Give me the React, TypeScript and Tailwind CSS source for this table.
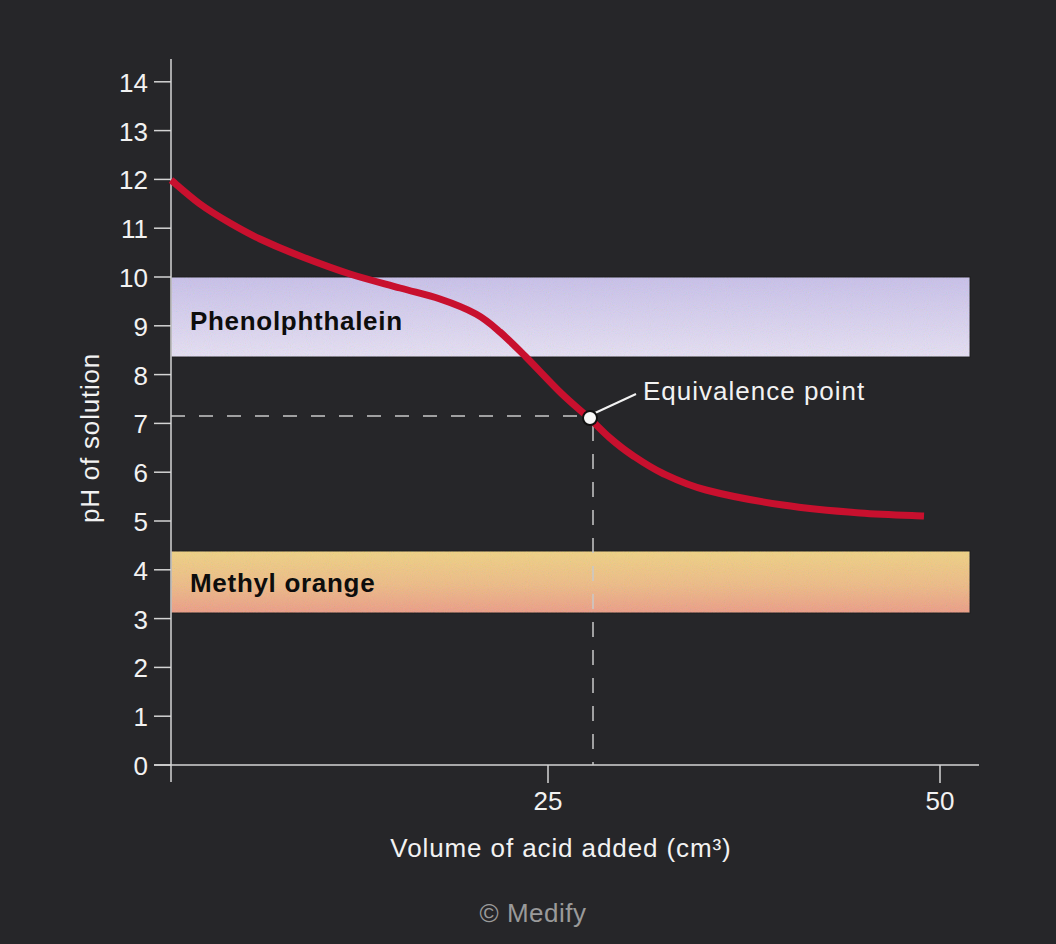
import React from "react";

const AXIS_X = 171;
const AXIS_Y = 765;
const UNIT = 48.8;
const yOf = (ph: number) => AXIS_Y - ph * UNIT;

// points read off the reference curve
const CURVE: [number, number][] = [
  [171, 180],
  [200, 204],
  [230, 223],
  [260, 239],
  [300, 256],
  [350, 274],
  [400, 288],
  [440, 299],
  [476, 314],
  [500, 332],
  [526, 357],
  [561, 393],
  [589, 418],
  [610, 438],
  [632, 455],
  [662, 473],
  [706, 490],
  [783, 505],
  [860, 513],
  [924, 516],
];

const smoothPath = (pts: [number, number][]) => {
  let d = `M${pts[0][0]},${pts[0][1]}`;
  for (let i = 0; i < pts.length - 1; i++) {
    const p0 = pts[i - 1] || pts[i];
    const p1 = pts[i];
    const p2 = pts[i + 1];
    const p3 = pts[i + 2] || p2;
    const c1x = p1[0] + (p2[0] - p0[0]) / 6;
    const c1y = p1[1] + (p2[1] - p0[1]) / 6;
    const c2x = p2[0] - (p3[0] - p1[0]) / 6;
    const c2y = p2[1] - (p3[1] - p1[1]) / 6;
    d += ` C${c1x.toFixed(1)},${c1y.toFixed(1)} ${c2x.toFixed(1)},${c2y.toFixed(1)} ${p2[0]},${p2[1]}`;
  }
  return d;
};

const TitrationChart = () => {
  const ticks = Array.from({ length: 15 }, (_, i) => i);
  const font = "'Liberation Sans', Arial, sans-serif";

  return (
    <svg width={1056} height={897} viewBox="0 0 1056 897" className="block" style={{ fontFamily: font }}>
      <defs>
        <linearGradient id="phenol" x1="0" y1="0" x2="0" y2="1">
          <stop offset="0" stopColor="#c8c0ea" />
          <stop offset="1" stopColor="#e6e0f4" />
        </linearGradient>
        <linearGradient id="methyl" x1="0" y1="0" x2="0" y2="1">
          <stop offset="0" stopColor="#f0d283" />
          <stop offset="0.55" stopColor="#eebb86" />
          <stop offset="1" stopColor="#ec9c86" />
        </linearGradient>
        <filter id="grain" x="0" y="0" width="100%" height="100%">
          <feTurbulence type="fractalNoise" baseFrequency="0.95" numOctaves="2" stitchTiles="stitch" />
          <feColorMatrix type="saturate" values="1.6" />
        </filter>
      </defs>

      {/* indicator bands */}
      <rect x={AXIS_X} y={yOf(10)} width={799} height={80} fill="url(#phenol)" stroke="#1c1c1e" strokeWidth={1} />
      <rect x={AXIS_X} y={yOf(10)} width={799} height={80} filter="url(#grain)" opacity={0.15} />
      <text x={190} y={321} dominantBaseline="central" fontSize={26} fontWeight={700} letterSpacing={0.7} fill="#0d0d0d">
        Phenolphthalein
      </text>

      <rect x={AXIS_X} y={551} width={799} height={62} fill="url(#methyl)" stroke="#1c1c1e" strokeWidth={1} />
      <rect x={AXIS_X} y={551} width={799} height={62} filter="url(#grain)" opacity={0.15} />
      <text x={190} y={583} dominantBaseline="central" fontSize={26} fontWeight={700} letterSpacing={0.7} fill="#0d0d0d">
        Methyl orange
      </text>

      {/* axes */}
      <line x1={AXIS_X} y1={59} x2={AXIS_X} y2={782} stroke="#d4d4d4" strokeWidth={1.5} />
      <line x1={154} y1={AXIS_Y} x2={979} y2={AXIS_Y} stroke="#d4d4d4" strokeWidth={1.5} />
      {ticks.map((v) => (
        <g key={v}>
          <line x1={154} y1={yOf(v)} x2={AXIS_X} y2={yOf(v)} stroke="#d4d4d4" strokeWidth={1.5} />
          <text x={148} y={yOf(v) + 1} textAnchor="end" dominantBaseline="central" fontSize={26} fill="#f2f2f2">
            {v}
          </text>
        </g>
      ))}
      {[
        [548, "25"],
        [940, "50"],
      ].map(([x, label]) => (
        <g key={label}>
          <line x1={x} y1={AXIS_Y} x2={x} y2={783} stroke="#d4d4d4" strokeWidth={1.5} />
          <text x={x} y={801} textAnchor="middle" dominantBaseline="central" fontSize={26} fill="#f2f2f2">
            {label}
          </text>
        </g>
      ))}

      <text
        x={561}
        y={848}
        textAnchor="middle"
        dominantBaseline="central"
        fontSize={26}
        letterSpacing={0.9}
        fill="#f2f2f2"
      >
        Volume of acid added (cm³)
      </text>
      <text
        x={90}
        y={438}
        textAnchor="middle"
        dominantBaseline="central"
        fontSize={26}
        letterSpacing={0.8}
        fill="#f2f2f2"
        transform="rotate(-90 90 438)"
      >
        pH of solution
      </text>

      {/* equivalence guides */}
      <line x1={AXIS_X} y1={416} x2={583} y2={416} stroke="#c9c9c9" strokeWidth={1.5} strokeDasharray="14 14" />
      <line x1={593} y1={426} x2={593} y2={AXIS_Y} stroke="#c9c9c9" strokeWidth={1.5} strokeDasharray="15 13" />

      {/* titration curve */}
      <path d={smoothPath(CURVE)} fill="none" stroke="#c8102e" strokeWidth={7} strokeLinecap="butt" strokeLinejoin="round" />

      <line x1={595} y1={413} x2={636} y2={394} stroke="#f2f2f2" strokeWidth={2} />
      <circle cx={590} cy={418} r={7} fill="#f7f7f7" stroke="#111" strokeWidth={2} />
      <text x={643} y={391} dominantBaseline="central" fontSize={26} letterSpacing={1} fill="#f2f2f2">
        Equivalence point
      </text>
    </svg>
  );
};

export default function App() {
  return (
    <div className="w-full h-[944px] bg-[#262629] flex flex-col items-center overflow-hidden font-['Liberation_Sans',Arial,sans-serif]">
      <TitrationChart />
      <div className="pl-[10px] text-[26px] leading-[32px] text-[#9a9a9a] tracking-[0.5px]">© Medify</div>
    </div>
  );
}
